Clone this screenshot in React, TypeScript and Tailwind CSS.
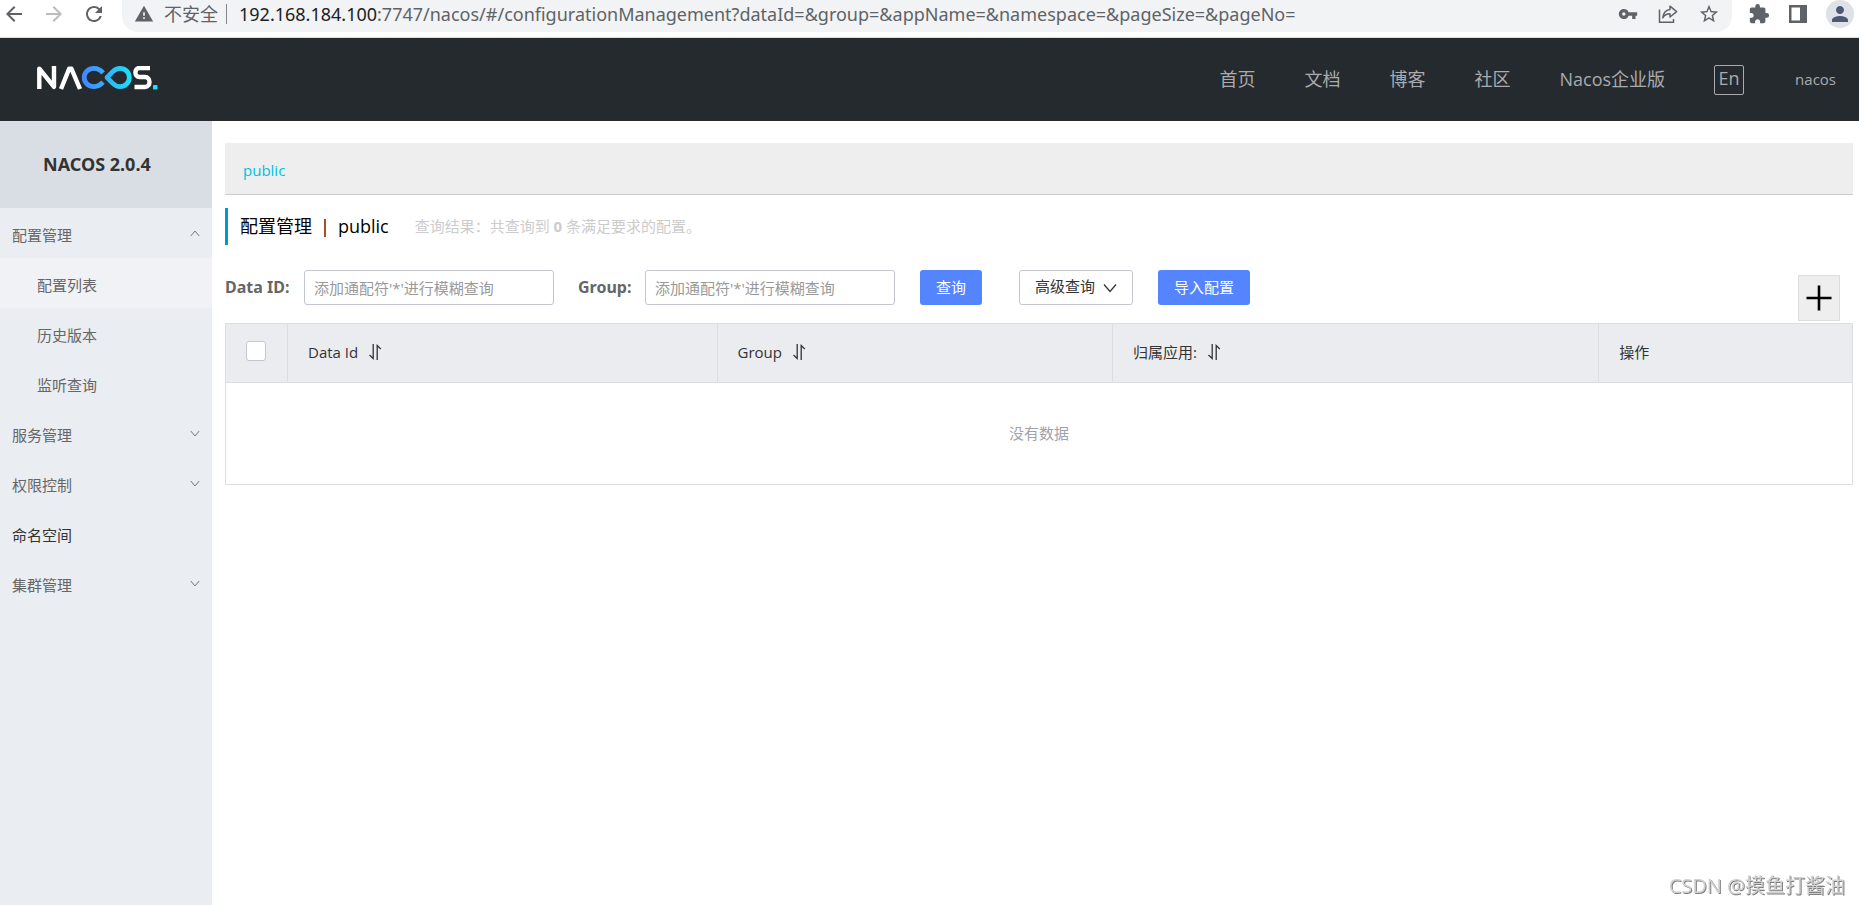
import React from "react";
import {
  MdArrowBack,
  MdArrowForward,
  MdRefresh,
  MdWarning,
  MdVpnKey,
  MdStarBorder,
  MdExtension,
  MdPerson,
} from "react-icons/md";

const navLinks = ["首页", "文档", "博客", "社区", "Nacos企业版"];

type MenuEntry = { label: string; open?: boolean; leaf?: boolean; children?: string[] };

const menu: MenuEntry[] = [
  { label: "配置管理", open: true, children: ["配置列表", "历史版本", "监听查询"] },
  { label: "服务管理" },
  { label: "权限控制" },
  { label: "命名空间", leaf: true },
  { label: "集群管理" },
];

function ShareIcon() {
  return (
    <svg className="h-5 w-5" viewBox="0 0 20 20" fill="none" stroke="#5f6368" strokeWidth="1.5">
      <path d="M1.5 5.5V18.2H15.5V15" />
      <path d="M12 2.2L18.6 7.6L12 13V9.8C8.6 9.8 6.4 11 4.8 13.8C5.2 9.2 7.6 6 12 5.4Z" strokeLinejoin="round" />
    </svg>
  );
}

function SidePanelIcon() {
  return (
    <svg className="h-5 w-5" viewBox="0 0 20 20">
      <path fill="#5f6368" fillRule="evenodd" d="M1 1H19V19H1ZM3.5 3.5V16.5H12V3.5Z" />
    </svg>
  );
}

function Logo() {
  return (
    <svg className="h-6 w-[121px]" viewBox="0 0 121 24" fill="none" role="img" aria-label="Nacos">
      <defs>
        <linearGradient id="loop" x1="45" y1="0" x2="95" y2="0" gradientUnits="userSpaceOnUse">
          <stop offset="0" stopColor="#4585fe" />
          <stop offset="1" stopColor="#1be2f5" />
        </linearGradient>
      </defs>
      <g stroke="#fff" strokeWidth="4.4" strokeLinejoin="round">
        <path d="M2.3 23V2.6L17 20.8V0" />
        <path d="M24 23L32.2 2.6H34.4L43 23" />
        <path d="M113 2H102.5C97 2 97 11 102.5 11H108C114 11 114 21 108 21H97.5" strokeLinejoin="miter" />
      </g>
      <g stroke="url(#loop)" strokeWidth="4.8">
        <path d="M66 7C63.5 3.8 60.5 2.4 57 2.4C51.5 2.4 47.2 6.4 47.2 11.5C47.2 16.6 51.5 20.6 57 20.6C60.5 20.6 63.2 19.3 66 16.2" />
        <path d="M70 11.5L75.5 5.9C78 3.4 80.2 2.4 83 2.4C88.2 2.4 92.3 6.4 92.3 11.5C92.3 16.6 88.2 20.6 83 20.6C80.2 20.6 78 19.6 75.5 17.1Z" strokeLinejoin="round" />
      </g>
      <rect x="116" y="19" width="4.5" height="4.5" rx="1" fill="#1be2f5" />
    </svg>
  );
}

function Chevron({ up = false, className }: { up?: boolean; className: string }) {
  return (
    <svg className={className} viewBox="0 0 14 10" fill="none" stroke="currentColor" strokeWidth="1.3">
      <path d={up ? "M1 8.5L7 1.5L13 8.5" : "M1 1.5L7 8.5L13 1.5"} />
    </svg>
  );
}

function SortButton({ label }: { label: string }) {
  return (
    <button type="button" aria-label={label} className="ml-2.5">
      <svg className="h-4 w-3.5" viewBox="0 0 14 16" fill="none" stroke="#333" strokeWidth="1.3">
        <path d="M5.2 0V14.5L1.5 11" />
        <path d="M9.2 16V1.5L12.8 5" />
      </svg>
    </button>
  );
}

function BrowserBar() {
  return (
    <div className="flex h-[38px] items-start border-b border-[#dadce0] bg-white text-[#5f6368]">
      <div className="flex h-7 items-center gap-4 pl-0.5">
        <button type="button" aria-label="后退"><MdArrowBack className="size-6" /></button>
        <button type="button" aria-label="前进" className="text-[#babcbe]"><MdArrowForward className="size-6" /></button>
        <button type="button" aria-label="重新加载"><MdRefresh className="size-6" /></button>
      </div>
      <div className="ml-4 flex h-8 min-w-0 flex-1 items-center rounded-b-2xl bg-[#f1f3f4] pr-3 pb-1 pl-3">
        <MdWarning className="size-5 shrink-0" />
        <span className="ml-2.5 shrink-0 text-[18px] leading-7">不安全</span>
        <span className="mr-3 ml-2 h-5 w-px shrink-0 bg-[#80868b]" />
        <span className="min-w-0 flex-1 truncate font-['Noto_Sans',sans-serif] text-[18px] leading-7">
          <span className="text-[#202124]">192.168.184.100</span>
          :7747/nacos/#/configurationManagement?dataId=&amp;group=&amp;appName=&amp;namespace=&amp;pageSize=&amp;pageNo=
        </span>
        <div className="flex shrink-0 items-center gap-5">
          <button type="button" aria-label="密码"><MdVpnKey className="size-5" /></button>
          <button type="button" aria-label="分享"><ShareIcon /></button>
          <button type="button" aria-label="收藏"><MdStarBorder className="size-[22px]" /></button>
        </div>
      </div>
      <div className="flex h-7 items-center gap-[18px] pr-[5px] pl-4">
        <button type="button" aria-label="扩展程序"><MdExtension className="size-[22px]" /></button>
        <button type="button" aria-label="侧边栏"><SidePanelIcon /></button>
        <button type="button" aria-label="个人资料" className="flex size-7 items-center justify-center rounded-full bg-[#dee1e6] text-[#4a5a75]">
          <MdPerson className="size-6" />
        </button>
      </div>
    </div>
  );
}

function Header() {
  return (
    <header className="flex h-[83px] items-center justify-between bg-[#252a2f] pr-[23px] pl-[37px] text-[#a9abad]">
      <a href="#home" className="mb-1"><Logo /></a>
      <nav className="flex items-center gap-[49px] text-[18px]">
        {navLinks.map((link) => (
          <a key={link} href={"#" + link}>{link}</a>
        ))}
        <button type="button" className="flex h-[30px] w-[30px] items-center justify-center rounded-xs border border-[#a9abad] pb-0.5">
          En
        </button>
        <a href="#user" className="pl-0.5 text-[15px]">nacos</a>
      </nav>
    </header>
  );
}

function Sidebar() {
  return (
    <aside className="w-[212px] shrink-0 bg-[#eaedf1] text-[15px] text-[#666]">
      <h1 className="flex h-[87px] items-center bg-[#d9dee4] pl-[43px] font-['Noto_Sans',sans-serif] text-[18px] font-bold text-[#333]">NACOS 2.0.4</h1>
      <ul>
        {menu.map((entry) => (
          <li key={entry.label}>
            {entry.leaf ? (
              <a href="#namespace" className="flex h-[50px] items-center pt-1 pl-3 text-[#333]">{entry.label}</a>
            ) : (
              <button type="button" aria-expanded={!!entry.open} className="flex h-[50px] w-full items-center justify-between pr-3 pl-3">
                <span className="pt-1">{entry.label}</span>
                <Chevron up={entry.open} className="h-[7px] w-2.5" />
              </button>
            )}
            {entry.children && (
              <ul>
                {entry.children.map((child, i) => (
                  <li key={child}>
                    <a
                      href={"#" + child}
                      className={i === 0 ? "flex h-[50px] items-center bg-[#f1f2f5] pt-1 pl-[37px]" : "flex h-[50px] items-center pt-1 pl-[37px]"}
                    >
                      {child}
                    </a>
                  </li>
                ))}
              </ul>
            )}
          </li>
        ))}
      </ul>
    </aside>
  );
}

function Filters() {
  const field =
    "h-[35px] w-[250px] rounded-[3px] border border-[#c4c6cf] bg-white px-[9px] text-[15px] text-[#333] outline-none placeholder:text-[#999]";
  const label = "font-['Noto_Sans',sans-serif] text-[16px] leading-[35px] font-bold text-[#666]";
  return (
    <form className="flex items-start pt-[25px] text-[15px]" onSubmit={(e) => e.preventDefault()}>
      <label htmlFor="dataId" className={"w-[79px] " + label}>Data ID:</label>
      <input id="dataId" className={field} placeholder="添加通配符'*'进行模糊查询" />
      <label htmlFor="group" className={"ml-6 w-[67px] " + label}>Group:</label>
      <input id="group" className={field} placeholder="添加通配符'*'进行模糊查询" />
      <button type="submit" className="ml-[25px] h-[35px] rounded-[3px] bg-[#5584ff] px-4 text-white">查询</button>
      <button type="button" className="ml-[37px] flex h-[35px] items-center gap-2 rounded-[3px] border border-[#c4c6cf] bg-white px-[15px] text-[#333]">
        <span className="pb-0.5">高级查询</span>
        <Chevron className="h-2.5 w-3.5" />
      </button>
      <button type="button" className="ml-[25px] h-[35px] rounded-[3px] bg-[#5584ff] px-4 text-white">导入配置</button>
      <button
        type="button"
        aria-label="新建配置"
        className="mt-[5px] mr-[13px] mb-0.5 ml-auto flex h-[46px] w-[42px] items-center justify-center border border-[#ddd] bg-[#eee]"
      >
        <svg className="size-[26px]" viewBox="0 0 26 26" stroke="#000" strokeWidth="2.6">
          <path d="M13 0.5V25.5M0.5 13H25.5" />
        </svg>
      </button>
    </form>
  );
}

function ConfigTable() {
  const head = "border border-[#dcdee3] px-5 pb-0.5 text-left font-normal";
  return (
    <table className="w-full table-fixed border-collapse text-[15px] text-[#333]">
      <colgroup>
        <col className="w-[62px]" />
        <col className="w-[26.4%]" />
        <col className="w-[24.3%]" />
        <col className="w-[29.9%]" />
        <col />
      </colgroup>
      <thead>
        <tr className="h-[59px] bg-[#ebecf0]">
          <th className="border border-[#dcdee3] px-5 pb-1">
            <input
              type="checkbox"
              aria-label="全选"
              className="block size-5 appearance-none rounded-[3px] border border-[#c4c6cf] bg-white"
            />
          </th>
          <th className={head}><div className="flex items-center">Data Id<SortButton label="按 Data Id 排序" /></div></th>
          <th className={head}><div className="flex items-center">Group<SortButton label="按 Group 排序" /></div></th>
          <th className={head}><div className="flex items-center">归属应用:<SortButton label="按归属应用排序" /></div></th>
          <th className={head}>操作</th>
        </tr>
      </thead>
      <tbody>
        <tr className="h-[102px]">
          <td colSpan={5} className="border border-[#dcdee3] text-center text-[#a0a2ad]">没有数据</td>
        </tr>
      </tbody>
    </table>
  );
}

export default function App() {
  return (
    <div className="flex min-h-screen flex-col bg-white font-['Open_Sans','Noto_Sans_CJK_SC',sans-serif]">
      <BrowserBar />
      <Header />
      <div className="flex flex-1">
        <Sidebar />
        <main className="min-w-0 flex-1 pt-[22px] pr-[6px] pl-[13px]">
          <div className="flex h-[52px] items-center border-b border-[#ccc] bg-[#eee] pt-1 pl-[18px] text-[15px] text-[#00c1de]">
            <a href="#public">public</a>
          </div>
          <div className="mt-[13px] flex h-[37px] items-center border-l-[3px] border-[#09c] pl-3">
            <h2 className="flex gap-2 text-[18px] text-black">
              <span>配置管理</span>
              <span>|</span>
              <span>public</span>
            </h2>
            <p className="ml-[26px] text-[15px] text-[#ccc]">
              查询结果：共查询到 <strong>0</strong> 条满足要求的配置。
            </p>
          </div>
          <Filters />
          <ConfigTable />
        </main>
      </div>
      <div className="pointer-events-none fixed right-3.5 bottom-1 text-[20px] text-[#d0d0d0] [text-shadow:1px_1px_0_#808080]">
        CSDN @摸鱼打酱油
      </div>
    </div>
  );
}
